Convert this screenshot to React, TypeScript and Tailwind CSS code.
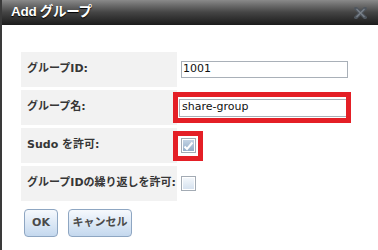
import React from "react";

const font = "font-['DejaVu_Sans','Noto_Sans_CJK_JP',sans-serif]";

function Checkbox({ checked }: { checked?: boolean }) {
  return (
    <div className="w-[15px] h-[15px] border border-[#a3abb4] bg-white p-[1px]">
      <div
        className={
          checked
            ? "w-full h-full bg-gradient-to-b from-[#c3d3e4] to-[#93adc8] flex items-center justify-center"
            : "w-full h-full bg-gradient-to-b from-[#f3f7fb] to-[#d6e2ef]"
        }
      >
        {checked && (
          <svg width="11" height="10" viewBox="0 0 11 10">
            <path d="M1.5 5.5 L4 8 L9.5 1.5" fill="none" stroke="#ffffff" strokeWidth="2" />
          </svg>
        )}
      </div>
    </div>
  );
}

function Row({ label, children }: { label: string; children: React.ReactNode }) {
  return (
    <div className="flex h-[35px]">
      <div className="w-[156px] bg-[#f2f2f2] flex items-center pl-[6px] text-[11px] font-bold text-[#363636] whitespace-nowrap">
        {label}
      </div>
      <div className="flex-1 flex items-center">{children}</div>
    </div>
  );
}

export default function App() {
  return (
    <div className={`w-[378px] h-[250px] overflow-hidden bg-white border-l-2 border-[#3a3a3a] ${font}`}>
      <div className="h-[25px] bg-gradient-to-b from-[#8a8a8a] via-[#444444] to-[#1c1c1c] flex items-center justify-between pl-[9px] pr-[11px]">
        <span className="text-white font-bold text-[13.5px] tracking-[-0.3px] font-['Liberation_Sans','Noto_Sans_CJK_JP',sans-serif] [text-shadow:0_1px_1px_#000]">
          Add グループ
        </span>
        <svg width="13" height="12" viewBox="0 0 13 12">
          <path d="M2 1.5 L11 10.5 M11 1.5 L2 10.5" stroke="#4f565e" strokeWidth="3.5" strokeLinecap="square" />
          <path d="M2.5 2 L10.5 10 M10.5 2 L2.5 10" stroke="#7b828a" strokeWidth="1.2" />
        </svg>
      </div>
      <div className="pl-[19px] pt-[27px] flex flex-col gap-[3px]">
        <Row label="グループID:">
          <div className="ml-[4px] w-[167px] h-[17px] border border-[#a9b0b8] flex items-center pl-[1px] text-[11px] text-[#111]">
            1001
          </div>
        </Row>
        <Row label="グループ名:">
          <div className="-ml-[4px] w-[178px] h-[31px] border-[5px] border-[#e41f26] pl-[1px] flex items-center">
            <div className="w-full h-[18px] border border-[#a9b0b8] border-r-0 flex items-center pl-[2px] text-[11px] text-[#111]">
              share-group
            </div>
          </div>
        </Row>
        <Row label="Sudo を許可:">
          <div className="-ml-[4px] w-[30px] h-[30px] border-[5px] border-[#e41f26] flex items-center justify-center">
            <Checkbox checked />
          </div>
        </Row>
        <Row label="グループIDの繰り返しを許可:">
          <div className="ml-[4px]">
            <Checkbox />
          </div>
        </Row>
        <div className="flex gap-[10px] pt-[5px] pl-[3px]">
          <button className="w-[34px] h-[28px] rounded-[4px] border border-[#8ea6c2] bg-gradient-to-b from-[#f6f9fd] to-[#c4d8ee] text-[11px] font-bold text-[#4a4a4a]">
            OK
          </button>
          <button className="w-[64px] h-[28px] rounded-[4px] border border-[#8ea6c2] bg-gradient-to-b from-[#f6f9fd] to-[#c4d8ee] text-[11px] font-bold text-[#4a4a4a]">
            キャンセル
          </button>
        </div>
      </div>
    </div>
  );
}
